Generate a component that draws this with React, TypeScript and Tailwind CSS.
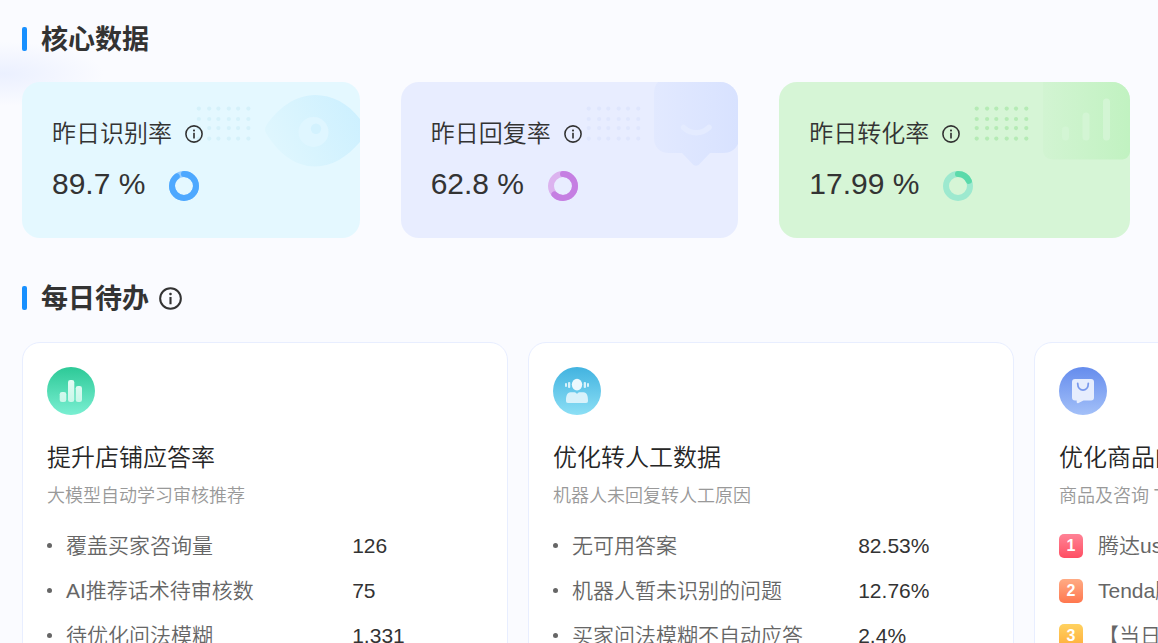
import type { ReactNode } from "react";

function InfoButton({ label, large = false }: { label: string; large?: boolean }) {
  return (
    <button type="button" aria-label={label} className="shrink-0 text-[#333]">
      <svg viewBox="0 0 24 24" fill="none" aria-hidden="true" className={large ? "size-[23px]" : "size-[18px]"}>
        <circle cx="12" cy="12" r="10.8" stroke="currentColor" strokeWidth="2.1" />
        <rect x="10.9" y="10.4" width="2.2" height="7.6" fill="currentColor" />
        <rect x="10.7" y="6" width="2.6" height="2.6" rx="1" fill="currentColor" />
      </svg>
    </button>
  );
}

function SectionTitle({ children, info }: { children: ReactNode; info?: string }) {
  return (
    <div className="flex h-10 items-center">
      <span className="h-6 w-[5px] rounded-[2px] bg-[#1890ff]" />
      <h2 className="mr-[10px] ml-[14px] pt-[2px] text-[27px] leading-10 font-bold">{children}</h2>
      {info && <InfoButton label={info} large />}
    </div>
  );
}

function Ring({ percent, color, track }: { percent: number; color: string; track: string }) {
  return (
    <svg viewBox="0 0 30 30" fill="none" aria-hidden="true" className="mt-1 size-[30px] shrink-0">
      <circle cx="15" cy="15" r="12" stroke={track} strokeWidth="6" />
      <circle
        cx="15"
        cy="15"
        r="12"
        stroke={color}
        strokeWidth="6"
        strokeLinecap="round"
        pathLength="100"
        strokeDasharray={`${percent} 100`}
        transform="rotate(-90 15 15)"
      />
    </svg>
  );
}

function Dots({ x, color }: { x: number; color: string }) {
  const columns = [0, 10.4, 19.6, 30, 39.3, 49.6];
  const rows = [26.6, 37, 46.1, 56.6];
  return (
    <g fill={color}>
      {rows.map((cy) => columns.map((dx) => <circle key={`${dx}-${cy}`} cx={x + dx} cy={cy} r="2.1" />))}
    </g>
  );
}

function Decoration({ children }: { children: ReactNode }) {
  return (
    <svg viewBox="0 0 180 90" fill="none" aria-hidden="true" className="absolute top-0 right-0 h-[90px] w-[180px]">
      {children}
    </svg>
  );
}

const eye = (
  <Decoration>
    <defs>
      <linearGradient id="eye" x1="85" y1="75" x2="180" y2="30" gradientUnits="userSpaceOnUse">
        <stop stopColor="#e1f7fe" />
        <stop offset="0.45" stopColor="#d8f4fe" />
        <stop offset="1" stopColor="#cdf0ff" />
      </linearGradient>
    </defs>
    <Dots x={18.8} color="#d5f1fa" />
    <path
      d="M86 51C84.5 49 84.5 46 86 44C97 27 115 13 135 13C152 13 168 21 180 37V60C167 75 152 84.5 135 84.5C115 84.5 98 71 86 51Z"
      fill="url(#eye)"
    />
    <circle cx="133.5" cy="50" r="15" fill="#dff6ff" />
    <circle cx="136" cy="46.7" r="5.2" fill="#d3f2fe" />
  </Decoration>
);

const bubble = (
  <Decoration>
    <defs>
      <linearGradient id="bubble" x1="96" y1="0" x2="180" y2="0" gradientUnits="userSpaceOnUse">
        <stop stopColor="#e2e9ff" />
        <stop offset="1" stopColor="#d8e2ff" />
      </linearGradient>
    </defs>
    <Dots x={30.7} color="#dfe6fd" />
    <path
      d="M100 0H180V62C177 68 172 71 165 71H152L142 81.5C139.500 84.500 136.500 84.500 134 81.500L124 71H111C102 71 96 65 96 56V12C96 7 97 3 100 0Z"
      fill="url(#bubble)"
    />
    <path d="M125.500 45.500C133 52.500 143.500 52.500 151 45.500" stroke="#e4ebff" strokeWidth="5.500" strokeLinecap="round" />
  </Decoration>
);

const bars = (
  <Decoration>
    <defs>
      <linearGradient id="bars" x1="93" y1="0" x2="180" y2="0" gradientUnits="userSpaceOnUse">
        <stop stopColor="#d2f4d2" />
        <stop offset="1" stopColor="#c1f2c1" />
      </linearGradient>
    </defs>
    <Dots x={26.7} color="#b5ebb5" />
    <path d="M93 0H180V70C179 75 176 77.500 171 77.500H103C97 77.500 93 74 93 68Z" fill="url(#bars)" />
    <g fill="#d3f5d4">
      <rect x="112" y="44.500" width="7" height="14" rx="3.500" />
      <rect x="132.500" y="30.500" width="7" height="28" rx="3.500" />
      <rect x="153" y="16.500" width="7" height="42" rx="3.500" />
    </g>
  </Decoration>
);

const metrics = [
  { label: "昨日识别率", value: "89.7", percent: 89.7, color: "#4da8ff", track: "#94cbff", background: "bg-[#e4f8ff]", art: eye },
  { label: "昨日回复率", value: "62.8", percent: 62.8, color: "#c57fe2", track: "#dcb3ef", background: "bg-[#e8edff]", art: bubble },
  { label: "昨日转化率", value: "17.99", percent: 17.99, color: "#5bdaaa", track: "#9de9cf", background: "bg-[#d6f5d6]", art: bars },
];

const analysisIcon = (
  <svg viewBox="0 0 48 48" aria-hidden="true" className="size-12">
    <defs>
      <linearGradient id="green" x1="0" y1="0" x2="0" y2="1">
        <stop stopColor="#2dc997" />
        <stop offset="1" stopColor="#7aefd2" />
      </linearGradient>
      <linearGradient id="greenBars" x1="0" y1="13" x2="0" y2="35" gradientUnits="userSpaceOnUse">
        <stop stopColor="#e4fbf4" />
        <stop offset="1" stopColor="#c8f7e9" />
      </linearGradient>
    </defs>
    <circle cx="24" cy="24" r="24" fill="url(#green)" />
    <g fill="url(#greenBars)">
      <rect x="12.700" y="25" width="6.600" height="10" rx="2.300" />
      <rect x="21" y="13" width="6.300" height="22" rx="2.300" />
      <rect x="28.700" y="19" width="6.300" height="16" rx="2.300" />
    </g>
  </svg>
);

const agentIcon = (
  <svg viewBox="0 0 48 48" aria-hidden="true" className="size-12">
    <defs>
      <linearGradient id="cyan" x1="0" y1="0" x2="0" y2="1">
        <stop stopColor="#42b3e0" />
        <stop offset="1" stopColor="#8cdff5" />
      </linearGradient>
    </defs>
    <circle cx="24" cy="24" r="24" fill="url(#cyan)" />
    <ellipse cx="24" cy="17.600" rx="5.200" ry="5.800" fill="#edf8fd" />
    <path
      d="M13 33.500C13 29 14 25.300 17.500 25.300H21.500C23 25.300 23.200 26.800 24 26.800C24.800 26.800 25 25.300 26.500 25.300H30.500C34 25.300 35 29 35 33.500C35 35.200 34.500 36 33 36H15C13.500 36 13 35.200 13 33.500Z"
      fill="#d8f2fb"
    />
    <g fill="#d8f2fb">
      <rect x="12" y="16" width="2" height="4" rx="0.900" />
      <rect x="15" y="15" width="2.300" height="6" rx="1" />
      <rect x="30.700" y="15" width="2.300" height="6" rx="1" />
      <rect x="34" y="16" width="2" height="4" rx="0.900" />
    </g>
  </svg>
);

const goodsIcon = (
  <svg viewBox="0 0 48 48" aria-hidden="true" className="size-12">
    <defs>
      <linearGradient id="blue" x1="0" y1="0" x2="0" y2="1">
        <stop stopColor="#658ced" />
        <stop offset="1" stopColor="#a3c0f8" />
      </linearGradient>
    </defs>
    <circle cx="24" cy="24" r="24" fill="url(#blue)" />
    <path
      d="M16 12H32C34 12 35 13 35 15V30.500C35 32.500 34 33.500 32 33.500H24.500L19.500 36C18.300 36.500 17.700 36 17.700 35V33.500H16C14 33.500 13 32.500 13 30.500V15C13 13 14 12 16 12Z"
      fill="#e6edfd"
    />
    <path d="M18.700 16.500C18.700 25.200 29.300 25.200 29.300 16.500" fill="none" stroke="#7999ec" strokeWidth="1.800" strokeLinecap="round" />
  </svg>
);

function TodoCard({ icon, title, subtitle, children }: { icon: ReactNode; title: string; subtitle: string; children: ReactNode }) {
  return (
    <article className="w-[486px] shrink-0 rounded-[18px] border border-[#e8eeff] bg-white p-6">
      {icon}
      <h3 className="mt-[25px] text-2xl leading-9 text-[#262626]">{title}</h3>
      <p className="mt-[7px] text-lg leading-[27px] text-[#999]">{subtitle}</p>
      <div className="mt-[13px] text-[21px]">{children}</div>
    </article>
  );
}

function StatTable({ rows }: { rows: [string, string][] }) {
  return (
    <table className="w-full table-fixed">
      <tbody>
        {rows.map(([name, value]) => (
          <tr key={name} className="h-[45px]">
            <th scope="row" className="w-[70%] p-0 text-left font-[350] text-[#666]">
              <span className="flex items-center gap-[14px]">
                <span className="size-[5px] rounded-full bg-[#666]" />
                {name}
              </span>
            </th>
            <td className="p-0 text-[#333]">{value}</td>
          </tr>
        ))}
      </tbody>
    </table>
  );
}

const products = [
  { name: "腾达usb网卡", badge: "bg-linear-to-b from-[#ff8296] to-[#ff4d63]" },
  { name: "Tenda腾达路由器", badge: "bg-linear-to-b from-[#ffab84] to-[#ff774e]" },
  { name: "【当日发货】", badge: "bg-linear-to-b from-[#ffd260] to-[#ffac38]" },
];

export default function App() {
  return (
    <main className="min-h-screen overflow-hidden bg-[#fafbff] bg-[radial-gradient(ellipse_100px_32px_at_4px_74px,#ebf0ff,transparent)] pt-[19px] pl-[22px] font-['Liberation_Sans','Noto_Sans_CJK_SC',sans-serif] font-[350] text-[#333]">
      <section className="pr-7">
        <SectionTitle>核心数据</SectionTitle>
        <div className="mt-[23px] flex gap-[41px]">
          {metrics.map((metric) => (
            <article
              key={metric.label}
              className={`relative flex-auto overflow-hidden rounded-[18px] px-[30px] pt-[34px] pb-8 ${metric.background}`}
            >
              {metric.art}
              <div className="relative flex items-center gap-[13px]">
                <h3 className="text-2xl leading-9 whitespace-nowrap">{metric.label}</h3>
                <InfoButton label={`${metric.label}说明`} />
              </div>
              <div className="relative mt-[9px] flex items-center gap-6">
                <p className="text-[30px] leading-[45px] whitespace-nowrap">{metric.value} %</p>
                <Ring percent={metric.percent} color={metric.color} track={metric.track} />
              </div>
            </article>
          ))}
        </div>
      </section>

      <section className="mt-10">
        <SectionTitle info="每日待办说明">每日待办</SectionTitle>
        <div className="mt-6 flex gap-5">
          <TodoCard icon={analysisIcon} title="提升店铺应答率" subtitle="大模型自动学习审核推荐">
            <StatTable
              rows={[
                ["覆盖买家咨询量", "126"],
                ["AI推荐话术待审核数", "75"],
                ["待优化问法模糊", "1,331"],
              ]}
            />
          </TodoCard>
          <TodoCard icon={agentIcon} title="优化转人工数据" subtitle="机器人未回复转人工原因">
            <StatTable
              rows={[
                ["无可用答案", "82.53%"],
                ["机器人暂未识别的问题", "12.76%"],
                ["买家问法模糊不自动应答", "2.4%"],
              ]}
            />
          </TodoCard>
          <TodoCard icon={goodsIcon} title="优化商品的知识" subtitle="商品及咨询 TOP">
            <ol>
              {products.map((product, index) => (
                <li key={product.name} className="flex h-[45px] items-center gap-[15px] text-[#666]">
                  <span
                    className={`flex size-6 items-center justify-center rounded-[5px] text-base font-bold text-white ${product.badge}`}
                  >
                    {index + 1}
                  </span>
                  {product.name}
                </li>
              ))}
            </ol>
          </TodoCard>
        </div>
      </section>
    </main>
  );
}
